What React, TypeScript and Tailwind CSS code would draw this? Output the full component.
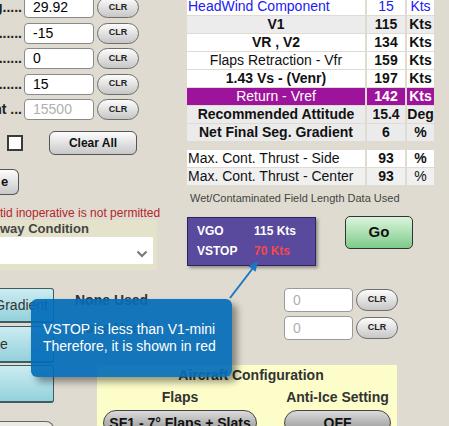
import React from 'react';

type Tone = 'plain' | 'blue' | 'purple';

type SpeedRow = {
  label: string;
  value: string;
  unit: string;
  bg: string;
  tone?: Tone;
  boldLabel?: boolean;
  boldUnit?: boolean;
  left?: boolean;
};

const fieldRows = [
  { label: 'g.....', value: '29.92' },
  { label: '......', value: '-15' },
  { label: '.......', value: '0' },
  { label: '.......', value: '15' },
  { label: 'nt ...', value: '15500', muted: true },
];

const speedRows: SpeedRow[] = [
  { label: 'HeadWind Component', value: '15', unit: 'Kts', bg: 'bg-white', tone: 'blue', left: true },
  { label: 'V1', value: '115', unit: 'Kts', bg: 'bg-[#ececec]', boldLabel: true, boldUnit: true },
  { label: 'VR , V2', value: '134', unit: 'Kts', bg: 'bg-white', boldLabel: true, boldUnit: true },
  { label: 'Flaps Retraction - Vfr', value: '159', unit: 'Kts', bg: 'bg-white', boldUnit: true },
  { label: '1.43 Vs - (Venr)', value: '197', unit: 'Kts', bg: 'bg-white', boldLabel: true, boldUnit: true },
  { label: 'Return - Vref', value: '142', unit: 'Kts', bg: 'bg-[#9e139b]', tone: 'purple', boldUnit: true },
  { label: 'Recommended Attitude', value: '15.4', unit: 'Deg', bg: 'bg-[#ebebeb]', boldLabel: true, boldUnit: true },
  { label: 'Net Final Seg. Gradient', value: '6', unit: '%', bg: 'bg-[#ebebeb]', boldLabel: true, boldUnit: true },
];

const thrustRows: SpeedRow[] = [
  { label: 'Max. Cont. Thrust - Side', value: '93', unit: '%', bg: 'bg-white', left: true, boldUnit: true },
  { label: 'Max. Cont. Thrust - Center', value: '93', unit: '%', bg: 'bg-[#f0f0f0]', left: true },
];

function ClrButton({ h = 'h-[21px]' }: { h?: string }) {
  return (
    <div className={`${h} w-[42px] shrink-0 rounded-full border border-[#6e6e6e] bg-linear-to-b from-[#fdfdfd] to-[#c6c6c6] flex items-center justify-center text-[9px] font-bold text-[#222]`}>
      CLR
    </div>
  );
}

function TableRow({ row }: { row: SpeedRow }) {
  const color = row.tone === 'blue' ? 'text-[#2020f2]' : row.tone === 'purple' ? 'text-white' : 'text-[#111]';
  return (
    <div className="flex gap-[2px] h-[17px] text-[14px] leading-[17px]">
      <div className={`w-[178px] ${row.bg} ${color} ${row.left ? 'pl-[1px] text-left' : 'text-center'} ${row.boldLabel ? 'font-bold' : ''} whitespace-nowrap overflow-hidden`}>
        {row.label}
      </div>
      <div className={`w-[38px] ${row.bg} ${color} text-center ${row.tone === 'blue' ? '' : 'font-bold'}`}>{row.value}</div>
      <div className={`w-[27px] ${row.bg} ${color} text-center ${row.boldUnit ? 'font-bold' : ''}`}>{row.unit}</div>
    </div>
  );
}

export default function App() {
  return (
    <div className="relative w-[449px] h-[426px] overflow-hidden bg-[#dfdbd0] font-['Liberation_Sans',Arial,sans-serif] text-[#222]">
      {/* top half */}
      <div className="flex items-start mt-[-3px]">
        <div className="w-[160px] shrink-0">
          <div className="flex flex-col gap-[4.5px]">
            {fieldRows.map((r, i) => (
              <div key={i} className="flex items-center h-[21px]">
                <div className="w-[22px] overflow-hidden flex justify-end whitespace-nowrap text-[14px] font-bold text-[#222]">
                  {r.label}
                </div>
                <div className={`ml-[2px] w-[70px] h-[21px] rounded-[4px] border border-[#8a8a8a] bg-white pl-[8px] text-[14px] leading-[19px] ${r.muted ? 'text-[#b0b0b0]' : 'text-black'}`}>
                  {r.value}
                </div>
                <div className="ml-[3px]">
                  <ClrButton />
                </div>
              </div>
            ))}
          </div>

          <div className="mt-[11px] flex items-center h-[24px]">
            <div className="ml-[7px] w-[16px] h-[16px] border-2 border-[#3a3a3a] bg-white" />
            <div className="ml-[26px] w-[88px] h-[24px] rounded-[6px] border border-[#555] bg-linear-to-b from-[#fdfdfd] to-[#c8c8c8] flex items-center justify-center text-[12px] font-bold text-[#111]">
              Clear All
            </div>
          </div>

          <div className="mt-[14px] w-[19px] h-[26px] rounded-r-[6px] border border-l-0 border-[#555] bg-linear-to-b from-[#fdfdfd] to-[#c8c8c8] flex items-center pl-[1px] text-[13px] font-bold text-[#111]">
            e
          </div>

          <div className="mt-[11px] h-[14px] leading-[14px] text-[12px] text-[#b3262b] whitespace-nowrap">
            tid inoperative is not permitted
          </div>

          <div className="w-[157px] bg-[#e4e2cb] pt-[1px] pb-[6px]">
            <div className="h-[16px] leading-[16px] text-[13px] font-bold text-[#444]">way Condition</div>
            <div className="w-[153px] h-[27px] bg-white flex items-center justify-end pr-[5px]">
              <svg width="12" height="8" viewBox="0 0 12 8" className="mt-[6px]">
                <path d="M1.5 1.5 L6 6 L10.5 1.5" fill="none" stroke="#777" strokeWidth="2" />
              </svg>
            </div>
          </div>
        </div>

        <div className="ml-[27px] w-[247px] pt-[1px]">
          <div className="flex flex-col gap-[1px]">
            {speedRows.map((r, i) => (
              <TableRow key={i} row={r} />
            ))}
          </div>
          <div className="mt-[9px] flex flex-col gap-[1px]">
            {thrustRows.map((r, i) => (
              <TableRow key={i} row={r} />
            ))}
          </div>
          <div className="mt-[6px] pl-[3px] h-[14px] leading-[14px] text-[11px] text-[#444] whitespace-nowrap">
            Wet/Contaminated Field Length Data Used
          </div>

          <div className="mt-[12px] flex items-start">
            <div className="w-[129px] h-[49px] bg-[#5a4a9d] border border-[#2b2262] shadow-[2px_2px_3px_rgba(0,0,0,0.35)] pt-[3px] pl-[9px] text-[12px] font-bold leading-[20px] text-white">
              <div className="flex">
                <span className="w-[57px]">VGO</span>
                <span>115 Kts</span>
              </div>
              <div className="flex">
                <span className="w-[57px]">VSTOP</span>
                <span className="text-[#f4494b]">70 Kts</span>
              </div>
            </div>
            <div className="ml-[29px] mt-[-1px] w-[68px] h-[33px] rounded-[5px] border border-[#333] bg-linear-to-b from-[#dcf4dc] to-[#7ccb8a] flex items-center justify-center text-[15px] font-bold text-[#111]">
              Go
            </div>
          </div>
        </div>
      </div>

      {/* bottom half */}
      <div className="flex items-start mt-[18px]">
        <div className="w-[54px] shrink-0">
          <div className="h-[35px] rounded-r-[3px] border border-l-0 border-[#3d5c63] border-b-2 bg-linear-to-b from-[#cbecf1] to-[#93d1dc] overflow-hidden flex items-center justify-end pr-[5px] whitespace-nowrap text-[14px] text-[#333]">
            Gradient
          </div>
          <div className="mt-[3px] h-[37px] rounded-r-[3px] border border-l-0 border-[#3d5c63] border-b-2 bg-linear-to-b from-[#cbecf1] to-[#93d1dc] flex items-center text-[14px] text-[#333]">
            e
          </div>
          <div className="mt-[2px] h-[38px] rounded-r-[3px] border border-l-0 border-[#3d5c63] border-b-2 bg-linear-to-b from-[#cbecf1] to-[#93d1dc]" />
          <div className="mt-[18px] h-[30px] rounded-tr-[8px] border border-l-0 border-[#666] bg-[#ecebe6]" />
        </div>

        <div className="flex-1">
          {[0, 1].map((i) => (
            <div key={i} className={`flex items-center h-[24px] ${i === 1 ? 'mt-[4px]' : ''}`}>
              <div className="ml-[21px] w-[209px] text-[14px] font-bold text-[#333]">None Used</div>
              <div className="w-[69px] h-[24px] rounded-[4px] border border-[#9a9a9a] bg-white pl-[8px] text-[14px] leading-[22px] text-[#b0b0b0]">
                0
              </div>
              <div className="ml-[3px]">
                <ClrButton h="h-[22px]" />
              </div>
            </div>
          ))}

          <div className="mt-[25px] ml-[43px] w-[300px] h-[70px] bg-[#fdfdc9]">
            <div className="pt-[1px] pl-[8px] text-center leading-[18px] text-[14px] font-bold text-[#333]">
              Aircraft Configuration
            </div>
            <div className="mt-[4px] pl-[6px] flex">
              <div className="w-[154px] flex flex-col items-center">
                <div className="leading-[18px] text-[14px] font-bold text-[#333]">Flaps</div>
                <div className="mt-[4px] w-full h-[26px] rounded-full border border-[#444] bg-linear-to-b from-[#dcdcdc] to-[#8c8c8c] flex items-center justify-center text-[14px] font-bold text-[#111] whitespace-nowrap">
                  SF1 - 7° Flaps + Slats
                </div>
              </div>
              <div className="ml-[27px] w-[107px] flex flex-col items-center">
                <div className="leading-[18px] text-[14px] font-bold text-[#333] whitespace-nowrap">Anti-Ice Setting</div>
                <div className="mt-[4px] w-full h-[26px] rounded-full border border-[#444] bg-linear-to-b from-[#dcdcdc] to-[#8c8c8c] flex items-center justify-center text-[14px] font-bold text-[#111]">
                  OFF
                </div>
              </div>
            </div>
          </div>
        </div>
      </div>

      {/* callout */}
      <svg className="absolute left-[225px] top-[255px]" width="40" height="48" viewBox="0 0 40 48">
        <line x1="5" y1="43" x2="28" y2="13" stroke="#1a79c3" strokeWidth="2" />
        <polygon points="33,6 30.6,16.7 23.4,11.3" fill="#1a79c3" />
      </svg>
      <div className="absolute left-[31px] top-[299px] w-[201px] h-[78px] rounded-[6px] bg-[rgba(3,108,184,0.92)] shadow-[5px_5px_7px_rgba(0,0,0,0.4)] pt-[22px] pl-[12px] text-[14px] leading-[17px] text-white whitespace-nowrap">
        <div>VSTOP is less than V1-mini</div>
        <div>Therefore, it is shown in red</div>
      </div>
    </div>
  );
}
